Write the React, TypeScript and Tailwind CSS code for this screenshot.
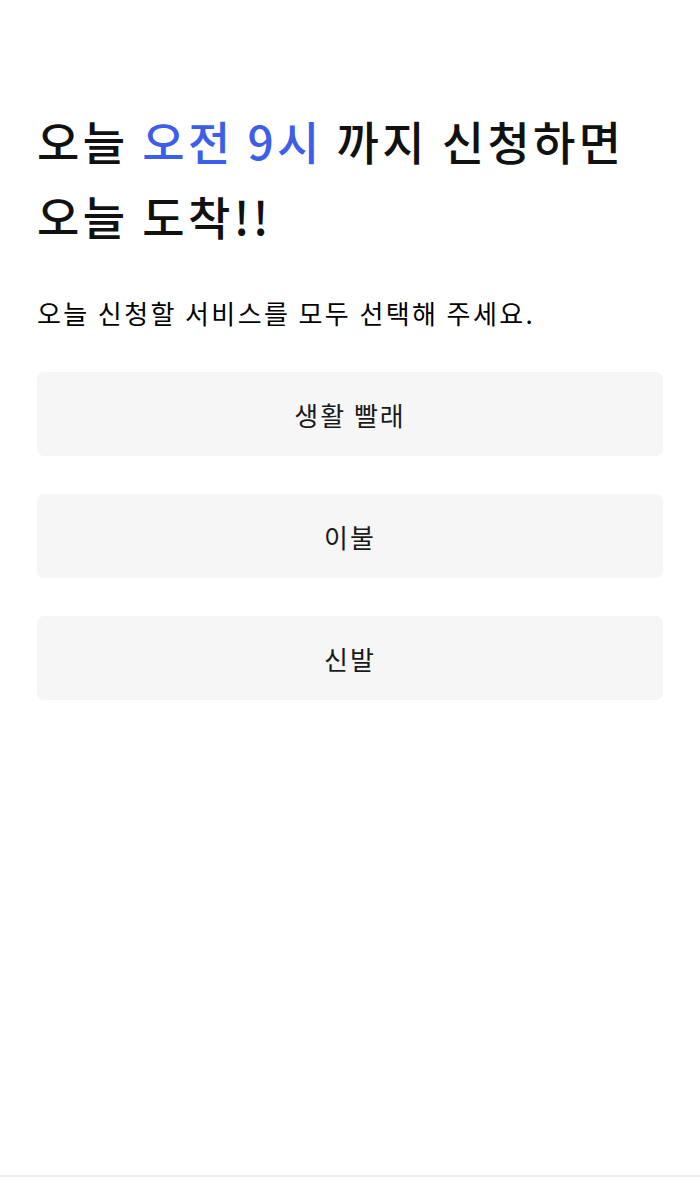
import React from 'react';

const services = ['생활 빨래', '이불', '신발'];

const App = () => {
  return (
    <div
      className="min-h-screen bg-white flex flex-col text-[#111111]"
      style={{ fontFamily: '"Noto Sans CJK KR", "Noto Sans", sans-serif' }}
    >
      <main className="flex-1 px-[37px] pt-[103px]">
        <h1 className="text-[46px] leading-[75px] font-medium tracking-[3.4px]">
          오늘 <span className="text-[#3d5ee8]">오전 9시</span> 까지 신청하면
          <br />
          오늘 도착!!
        </h1>

        <p className="mt-[42px] text-[26px] leading-[36px] font-normal tracking-[2.4px] text-black">
          오늘 신청할 서비스를 모두 선택해 주세요.
        </p>

        <div className="mt-[41px] flex flex-col gap-[38px]">
          {services.map((name) => (
            <button
              key={name}
              className="h-[84px] w-full rounded-[7px] bg-[#f6f6f6] text-[26px] font-normal tracking-[2px] text-[#1a1a1a]"
            >
              {name}
            </button>
          ))}
        </div>
      </main>

      <footer className="h-[25px] border-t-2 border-[#eeeeee]" />
    </div>
  );
};

export default App;
